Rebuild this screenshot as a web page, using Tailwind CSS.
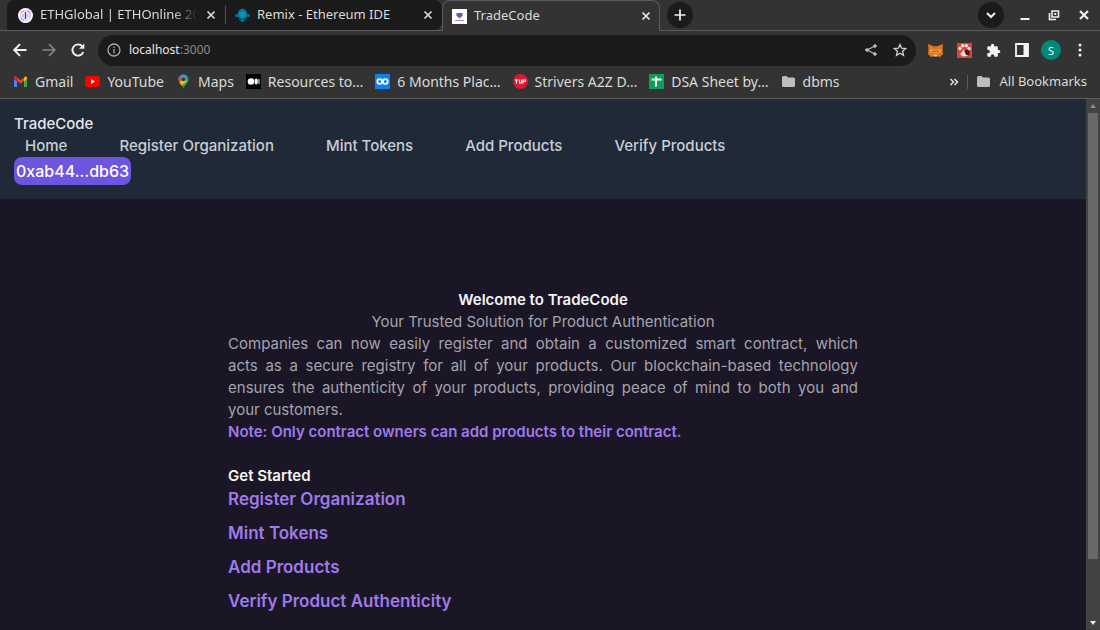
<!DOCTYPE html>
<html lang="en">
<head>
<meta charset="utf-8">
<meta name="viewport" content="width=device-width, initial-scale=1">
<title>TradeCode</title>
<script src="https://cdn.jsdelivr.net/npm/@tailwindcss/browser@4"></script>
</head>
<body class="flex h-screen flex-col overflow-hidden bg-[#1a1625] font-['Noto_Sans',sans-serif] text-[13px] text-[#dadada]">

<!-- Tab strip -->
<div class="flex h-[31px] shrink-0 items-stretch border-b border-[#5c5c5c] bg-[#333333]">
  <div class="ml-[7px] flex w-[218px] items-center rounded-tl-lg bg-[#1b1b1b] pl-[11px] pr-[6px]">
    <svg class="size-[15px] shrink-0" viewBox="0 0 15 15"><circle cx="7.500" cy="7.500" r="7.500" fill="#fff"/><circle cx="7.500" cy="7.500" r="5" fill="none" stroke="#d9cbf5" stroke-width="1.500"/><path d="M3 5a5 5 0 0 1 3-2.300" stroke="#f4b26a" stroke-width="1.500" fill="none"/><path d="M9 2.800a5 5 0 0 1 3 3" stroke="#ef8fc0" stroke-width="1.500" fill="none"/><path d="M3 10a5 5 0 0 0 3 2.300" stroke="#6ccdf0" stroke-width="1.500" fill="none"/><path d="M5 6v3.500M10 6v3.500" stroke="#a99bd0" stroke-width="1.200"/><path d="M7.500 4v7" stroke="#4b3c6c" stroke-width="1.500"/></svg>
    <span class="ml-[7px] w-[158px] overflow-hidden whitespace-nowrap [mask-image:linear-gradient(to_right,black_84%,transparent)]">ETHGlobal | ETHOnline 2023</span>
    <button class="ml-auto p-0.5" aria-label="Close ETHGlobal tab"><svg class="size-3" viewBox="0 0 12 12" stroke="#dadada" stroke-width="1.700"><path d="M2.500 2.500l7 7M9.500 2.500l-7 7"/></svg></button>
  </div>
  <div class="flex w-[217px] items-center rounded-tr-lg rounded-br-lg bg-[#1b1b1b] pr-[6px]">
    <span class="h-[18px] w-px bg-[#555555]"></span>
    <svg class="ml-[9px] size-[15px] shrink-0" viewBox="0 0 15 15" fill="#0d7391"><path d="M2.800 5.500a4.700 4.700 0 0 1 9.400 0L12 9.500 7.500 12 3 9.500z"/><circle cx="1.700" cy="7.500" r="1.600"/><circle cx="13.300" cy="7.500" r="1.600"/><path d="M3 10.500l4.500 4 4.500-4-4.500 1.500z"/><circle cx="7.500" cy="6.500" r="3.200" fill="#0a92bf"/></svg>
    <span class="ml-[7px] whitespace-nowrap">Remix - Ethereum IDE</span>
    <button class="ml-auto p-0.5" aria-label="Close Remix tab"><svg class="size-3" viewBox="0 0 12 12" stroke="#dadada" stroke-width="1.700"><path d="M2.500 2.500l7 7M9.500 2.500l-7 7"/></svg></button>
  </div>
  <div class="-mb-px flex w-[218px] items-center rounded-t-lg border-x border-t border-[#5c5c5c] bg-[#333333] pl-[9px] pr-[5px]">
    <svg class="size-[15px] shrink-0" viewBox="0 0 15 15"><path fill="#fff" d="M0 0h15v15H0z"/><path d="M4.500 4h6v2.500L9 8.500H6L4.500 6.500z" fill="#7c5596"/><path d="M7 8h1v2H7zM3 11h9v1H3z" fill="#a78bbd"/></svg>
    <span class="ml-[7px] whitespace-nowrap">TradeCode</span>
    <button class="ml-auto p-0.5" aria-label="Close TradeCode tab"><svg class="size-3" viewBox="0 0 12 12" stroke="#e8e8e8" stroke-width="1.700"><path d="M2.500 2.500l7 7M9.500 2.500l-7 7"/></svg></button>
  </div>
  <button class="ml-[7px] flex size-[26px] items-center justify-center self-center rounded-full bg-[#1b1b1b]" aria-label="New tab"><svg class="size-3" viewBox="0 0 12 12" stroke="#efefef" stroke-width="1.700"><path d="M6 .5v11M.5 6h11"/></svg></button>
  <div class="ml-auto flex items-center pr-[10px]">
    <button class="flex size-[26px] items-center justify-center rounded-full bg-[#1b1b1b]" aria-label="Search tabs"><svg class="size-3" viewBox="0 0 12 12" fill="none" stroke="#efefef" stroke-width="2"><path d="M2 4l4 4 4-4"/></svg></button>
    <button class="ml-[15px]" aria-label="Minimize"><svg class="size-3" viewBox="0 0 12 12" fill="#efefef"><path d="M1.500 9h9v2h-9z"/></svg></button>
    <button class="ml-[17px]" aria-label="Restore"><svg class="size-3" viewBox="0 0 12 12" fill="none" stroke="#efefef" stroke-width="1.600"><path d="M4 2h6.500v6H4z"/><path d="M1.500 4v6.500H8" /><path d="M6.500 4.500h1.500v1H6.500z" stroke-width="1"/></svg></button>
    <button class="ml-[18px]" aria-label="Close window"><svg class="size-3" viewBox="0 0 12 12" stroke="#efefef" stroke-width="2.200"><path d="M2 2l8 8M10 2l-8 8"/></svg></button>
  </div>
</div>

<!-- Toolbar -->
<div class="flex h-[38px] shrink-0 items-center bg-[#333333] pl-3 pr-[13px]">
  <button aria-label="Back"><svg class="size-4" viewBox="0 0 16 16" fill="none" stroke="#f2f2f2" stroke-width="1.900"><path d="M14.500 8H2.500M8 2.200L2.200 8 8 13.800"/></svg></button>
  <button class="ml-[13px]" aria-label="Forward"><svg class="size-4" viewBox="0 0 16 16" fill="none" stroke="#858585" stroke-width="1.700"><path d="M1.500 8h12M8 2.200L13.800 8 8 13.800"/></svg></button>
  <button class="ml-[13px]" aria-label="Reload"><svg class="size-4" viewBox="0 0 16 16" fill="none" stroke="#f2f2f2" stroke-width="1.900"><path d="M13.300 10A5.600 5.600 0 1 1 12.200 4.200"/><path d="M14.300 1.500v5.300H9z" fill="#f2f2f2" stroke="none"/></svg></button>
  <div class="ml-3 flex h-[31px] min-w-0 flex-1 items-center rounded-full bg-[#1b1b1b] pl-[9px] pr-[9px]">
    <svg class="size-[14px] shrink-0" viewBox="0 0 14 14" fill="none" stroke="#a8a8a8" stroke-width="1.300"><circle cx="7" cy="7" r="6"/><path d="M7 6v4.500M7 3.500v1.500"/></svg>
    <span class="ml-2 text-[12px] text-[#e6e6e6]">localhost<span class="text-[#8b8b8b]">:3000</span></span>
    <button class="ml-auto" aria-label="Share"><svg class="size-[14px]" viewBox="0 0 14 14" fill="#bdbdbd" stroke="#bdbdbd"><path d="M11 3L3 7l8 4" fill="none" stroke-width="1.200"/><circle cx="11" cy="3" r="1.300"/><circle cx="3" cy="7" r="1.300"/><circle cx="11" cy="11" r="1.300"/></svg></button>
    <button class="ml-[15px]" aria-label="Bookmark this tab"><svg class="size-[14px]" viewBox="0 0 14 14" fill="none" stroke="#cfcfcf" stroke-width="1.300"><path d="M7 1.500l1.600 3.700 4 .4-3 2.700.9 4L7 10.200l-3.500 2.100.9-4-3-2.700 4-.4z"/></svg></button>
  </div>
  <div class="ml-3 flex items-center gap-[14px]">
    <button aria-label="MetaMask"><svg class="size-[15px]" viewBox="0 0 15 15"><path d="M0 1l5.500 2.300h4L15 1l-.5 6 .5 4-3 3-3-.8H6L3 14l-3-3 .5-4z" fill="#e2761b"/><path d="M1 7l4-1 2.500 4L10 6l4 1-2 3H3z" fill="#f29a3c"/><path d="M3.500 8l2 .3.500 1.200zM11.500 8l-2 .3-.5 1.200z" fill="#3b2a20"/><path d="M5.500 11.500h4l-.5 2H6z" fill="#d8c4b5"/></svg></button>
    <button aria-label="Gnome extension"><svg class="size-[15px]" viewBox="0 0 15 15"><path fill="#dc4438" d="M0 0h15v15H0z"/><g fill="#f6dedb"><circle cx="3" cy="5.500" r="1.700"/><circle cx="5.700" cy="2.800" r="1.700"/><circle cx="9.300" cy="2.800" r="1.700"/><circle cx="12" cy="5.500" r="1.700"/><path d="M3 11l4-4.500 4.500 3.500-1 3-5 .5z"/></g><path d="M7 7.500l4-1 2 3-1 3-3-.5z" fill="#40211d"/></svg></button>
    <button aria-label="Extensions"><svg class="size-[15px]" viewBox="0 0 24 24" fill="#f4f4f4"><path d="M20.500 11H19V7a2 2 0 0 0-2-2h-4V3.500a2.500 2.500 0 0 0-5 0V5H4a2 2 0 0 0-2 2v3.800h1.500a2.700 2.700 0 0 1 0 5.400H2V20a2 2 0 0 0 2 2h3.800v-1.500a2.700 2.700 0 0 1 5.400 0V22H17a2 2 0 0 0 2-2v-4h1.500a2.500 2.500 0 0 0 0-5z"/></svg></button>
    <button aria-label="Side panel"><svg class="size-[14px]" viewBox="0 0 14 14"><path d="M1 1h12v12H1z" fill="none" stroke="#f4f4f4" stroke-width="1.800"/><path d="M8.500 1H13v12H8.500z" fill="#f4f4f4"/></svg></button>
    <button class="-mx-0.5 flex size-5 items-center justify-center rounded-full bg-[#00897b] text-[11px] leading-none text-white" aria-label="Profile">S</button>
    <button aria-label="Menu"><svg class="size-[14px]" viewBox="0 0 14 14" fill="#f4f4f4"><circle cx="7" cy="2" r="1.500"/><circle cx="7" cy="7" r="1.500"/><circle cx="7" cy="12" r="1.500"/></svg></button>
  </div>
</div>

<!-- Bookmarks bar -->
<div class="flex h-[30px] shrink-0 items-center justify-between border-b border-[#5c5c5c] bg-[#333333] pb-[4px] pl-[13px] pr-[13px] whitespace-nowrap">
  <div class="flex items-center gap-3 text-[14px]">
    <a href="#" class="flex items-center gap-[7px]"><svg class="size-[15px]" viewBox="0 0 15 15"><path d="M1 4v9h3V7z" fill="#4285f4"/><path d="M14 4v9h-3V7z" fill="#34a853"/><path d="M1 4.500l6.500 5 6.500-5V3l-1.500-.7-5 3.900-5-3.900L1 3z" fill="#ea4335"/><path d="M11 4v3.500l3-2.500V3.500L12.700 2.400z" fill="#fbbc04"/><path d="M1 3.500V5l3 2.500V4z" fill="#c5221f"/></svg>Gmail</a>
    <a href="#" class="flex items-center gap-[7px]"><svg class="size-[15px]" viewBox="0 0 15 15"><rect y="2" width="15" height="11" rx="3" fill="#f00"/><path d="M6 5v5l4-2.500z" fill="#fff"/></svg>YouTube</a>
    <a href="#" class="flex items-center gap-[7px]"><svg class="size-[15px]" viewBox="0 0 15 15"><path d="M7.500.5a5 5 0 0 1 5 5c0 4-4 5-5 9-1-4-5-5-5-9a5 5 0 0 1 5-5z" fill="#34a853"/><path d="M7.500.5a5 5 0 0 0-5 5L4 8l6-7z" fill="#4285f4"/><path d="M3.500 2.500L7.500 6l-4 3a6 6 0 0 1-1-3.500z" fill="#ea4335"/><path d="M3.500 8.500l5-5 2 4-5 4z" fill="#fbbc04"/><path d="M10 1.200l2 2.300-4.500 2z" fill="#4285f4"/><circle cx="7.500" cy="5.500" r="1.800" fill="#333"/></svg>Maps</a>
    <a href="#" class="flex items-center gap-[7px]"><svg class="size-[15px]" viewBox="0 0 15 15"><path d="M0 0h15v15H0z"/><circle cx="5" cy="7.500" r="3.300" fill="#fff"/><ellipse cx="10.200" cy="7.500" rx="1.600" ry="3" fill="#fff"/><path d="M12.500 5h1v5h-1z" fill="#fff"/></svg>Resources to…</a>
    <a href="#" class="flex items-center gap-[7px]"><svg class="size-[15px]" viewBox="0 0 15 15"><path d="M0 0h15v15H0z" fill="#0a84f5"/><g fill="none" stroke="#fff" stroke-width="1.700"><circle cx="4.700" cy="7.500" r="2.400"/><circle cx="10.300" cy="7.500" r="2.400"/></g></svg>6 Months Plac…</a>
    <a href="#" class="flex items-center gap-[7px]"><svg class="size-[15px]" viewBox="0 0 15 15"><circle cx="7.500" cy="7.500" r="7.500" fill="#dc1832"/><path d="M2 6h3M3.500 6v3.500M6.500 5.500v3.500h2V5.500M10 9.500V6h2.500v1.500H10" fill="none" stroke="#fff" stroke-width="1.100"/></svg>Strivers A2Z D…</a>
    <a href="#" class="flex items-center gap-[7px]"><svg class="size-[15px]" viewBox="0 0 15 15"><path d="M0 0h15v15H0z" fill="#0f9d58"/><path d="M2.500 5.500h10M7 2.500v10" stroke="#fff" stroke-width="2"/></svg>DSA Sheet by…</a>
    <a href="#" class="flex items-center gap-[7px]"><svg class="size-[15px]" viewBox="0 0 15 15" fill="#bdbdbd"><path d="M1 3.500A1.500 1.500 0 0 1 2.500 2h3L7 3.500h5.500A1.500 1.500 0 0 1 14 5v6.500a1.500 1.500 0 0 1-1.500 1.500h-10A1.500 1.500 0 0 1 1 11.500z"/></svg>dbms</a>
  </div>
  <div class="flex items-center">
    <button aria-label="More bookmarks"><svg class="size-[10px]" viewBox="0 0 10 10" fill="none" stroke="#e6e6e6" stroke-width="1.500"><path d="M1.500 2l3 3-3 3M5.500 2l3 3-3 3"/></svg></button>
    <span class="ml-2 h-[14px] w-px bg-[#5c5c5c]"></span>
    <a href="#" class="ml-2 flex items-center gap-2"><svg class="size-[15px]" viewBox="0 0 15 15" fill="#bdbdbd"><path d="M1 3.500A1.500 1.500 0 0 1 2.500 2h3L7 3.500h5.500A1.500 1.500 0 0 1 14 5v6.500a1.500 1.500 0 0 1-1.500 1.500h-10A1.500 1.500 0 0 1 1 11.500z"/></svg>All Bookmarks</a>
  </div>
</div>

<!-- Page -->
<div class="flex min-h-0 flex-1 font-['Inter',sans-serif] text-[15px] leading-[22px]">
  <div class="min-w-0 flex-1 overflow-hidden">
    <header class="bg-[#1f2937] p-[14px] font-medium text-[#c9cdd4]">
      <p class="text-[#e5e7eb]">TradeCode</p>
      <nav class="flex gap-[52px] px-[11px]">
        <a href="#">Home</a>
        <a href="#">Register Organization</a>
        <a href="#">Mint Tokens</a>
        <a href="#">Add Products</a>
        <a href="#">Verify Products</a>
      </nav>
      <button class="block h-7 rounded-lg bg-[#6d55e0] px-0.5 text-[16px] font-medium text-white">0xab44...db63</button>
    </header>
    <main class="mx-auto w-[58%] pt-[90px] text-[#a5a3ae]">
      <h1 class="text-center font-semibold text-[#f3f4f6]">Welcome to TradeCode</h1>
      <p class="text-center">Your Trusted Solution for Product Authentication</p>
      <p>
        <span class="block [text-align-last:justify]">Companies can now easily register and obtain a customized smart contract, which</span>
        <span class="block [text-align-last:justify]">acts as a secure registry for all of your products. Our blockchain-based technology</span>
        <span class="block [text-align-last:justify]">ensures the authenticity of your products, providing peace of mind to both you and</span>
        <span class="block">your customers.</span>
      </p>
      <p class="font-semibold text-[#9f7aea]">Note: Only contract owners can add products to their contract.</p>
      <h2 class="mt-[22px] font-semibold text-[#f3f4f6]">Get Started</h2>
      <ul class="flex flex-col gap-[10px] text-[17px] leading-6 font-semibold text-[#9f7aea]">
        <li><a href="#">Register Organization</a></li>
        <li><a href="#">Mint Tokens</a></li>
        <li><a href="#">Add Products</a></li>
        <li><a href="#">Verify Product Authenticity</a></li>
      </ul>
    </main>
  </div>
  <div class="flex w-[14px] shrink-0 flex-col items-center bg-[#424242]">
    <svg class="h-[14px] w-2 shrink-0" viewBox="0 0 8 14" fill="#8a8a8a"><path d="M1 9l3-4 3 4z"/></svg>
    <div class="w-[10px] grow-[446] bg-[#686868]"></div>
    <div class="grow-[57]"></div>
    <svg class="h-[14px] w-2 shrink-0" viewBox="0 0 8 14" fill="#f0f0f0"><path d="M1 5h6L4 9z"/></svg>
  </div>
</div>
</body>
</html>
